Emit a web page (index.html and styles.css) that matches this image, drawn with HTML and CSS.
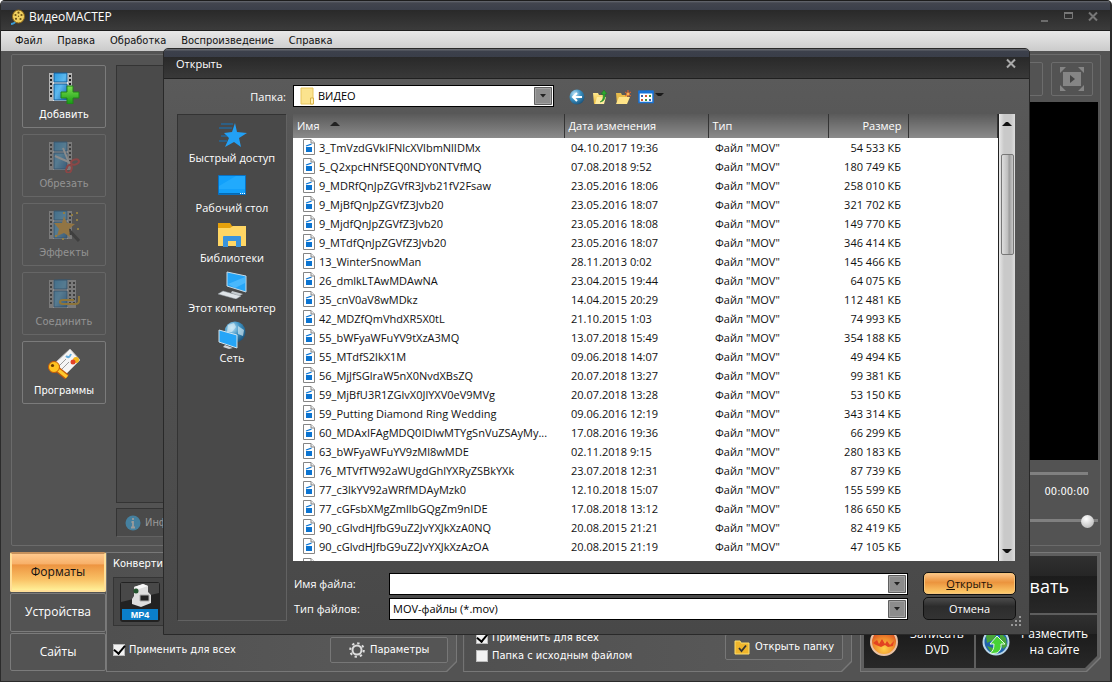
FILE: index.html
```html
<!DOCTYPE html>
<html lang="ru">
<head>
<meta charset="utf-8">
<title>ВидеоМАСТЕР</title>
<link rel="stylesheet" href="styles.css">
</head>
<body>
<svg class="defs" aria-hidden="true">
  <defs>
    <linearGradient id="gBlue" x1="0" y1="0" x2="1" y2="1"><stop offset="0" stop-color="#2a9ae0"/><stop offset=".5" stop-color="#5cb8ee"/><stop offset="1" stop-color="#1769b0"/></linearGradient>
    <linearGradient id="gGreen" x1="0" y1="0" x2="0" y2="1"><stop offset="0" stop-color="#7be04f"/><stop offset="1" stop-color="#169a14"/></linearGradient>
    <linearGradient id="gFolder" x1="0" y1="0" x2="0" y2="1"><stop offset="0" stop-color="#ffe88e"/><stop offset="1" stop-color="#e9b93c"/></linearGradient>
    <radialGradient id="gBall" cx=".35" cy=".3" r=".8"><stop offset="0" stop-color="#bfe6fa"/><stop offset=".5" stop-color="#3a8fc0"/><stop offset="1" stop-color="#17496f"/></radialGradient>
    <radialGradient id="gFire" cx=".5" cy=".75" r=".8"><stop offset="0" stop-color="#ffd24a"/><stop offset=".5" stop-color="#f08a2c"/><stop offset="1" stop-color="#c9301c"/></radialGradient>
    <symbol id="film" viewBox="0 0 32 32">
      <path d="M1 1h23v28H1z" fill="#e4e4e4"/>
      <path d="M1 1h4v28H1zM20 1h4v28h-4z" fill="#b4b4b4"/>
      <path d="M2 3h2v2H2zm0 4h2v2H2zm0 4h2v2H2zm0 4h2v2H2zm0 4h2v2H2zm0 4h2v2H2zM21 3h2v2h-2zm0 4h2v2h-2zm0 4h2v2h-2zm0 4h2v2h-2zm0 4h2v2h-2zm0 4h2v2h-2z" fill="#222"/>
      <path d="M6 1h13v9H6zM6 12h13v16H6z" fill="url(#gBlue)" stroke="#135a94"/>
    </symbol>
    <symbol id="file" viewBox="0 0 12 16">
      <path d="M.5.5h7.500l3.500 3.500v11.500H.5z" fill="#fff" stroke="#858585"/>
      <path d="M8 .5V4h3.500" fill="#eee" stroke="#858585"/>
      <path d="M3 8h6v5H3z" fill="#0b74d1"/><path d="M3 7l5.500-1.800" stroke="#0b74d1" stroke-width="1.300"/>
    </symbol>
    <symbol id="drop" viewBox="0 0 18 18">
      <path d="M.5.5h17v17H.5z" fill="#8c8c8c" stroke="#5f5f5f"/><path d="M1.500 1.500h15v15h-15z" fill="none" stroke="#a2a2a2"/><path d="M6 7h6l-3 3.500z" fill="#222"/>
    </symbol>
  </defs>
</svg>

<div class="app">
  <header class="titlebar">
    <svg class="logo" viewBox="0 0 16 16"><path d="M1 15q3 0 5-3" stroke="#3a9bd2" stroke-width="2" fill="none"/><ellipse cx="8.500" cy="7.500" rx="6" ry="6.500" fill="#f0d060" stroke="#8b6516"/><g fill="#6d5313"><circle cx="8.500" cy="3.700" r="1.100"/><circle cx="5.500" cy="6" r="1.100"/><circle cx="11.500" cy="6" r="1.100"/><circle cx="6" cy="9.800" r="1.100"/><circle cx="10.500" cy="10" r="1.100"/><circle cx="8.500" cy="7.200" r=".7"/></g></svg>
    <h1>ВидеоМАСТЕР</h1>
    <div class="winbtns">
      <button aria-label="Свернуть"><svg viewBox="0 0 12 12"><path d="M2 10h7" stroke="#6c6c6c" stroke-width="2"/></svg></button>
      <button aria-label="Развернуть"><svg viewBox="0 0 12 12"><path d="M1.500 2.500h8v5h-8z" fill="none" stroke="#777"/><path d="M1 2h9" stroke="#777" stroke-width="2"/></svg></button>
      <button aria-label="Закрыть"><svg viewBox="0 0 12 12"><path d="M2 1.500l8 8M10 1.500l-8 8" stroke="#777" stroke-width="2"/></svg></button>
    </div>
  </header>
  <nav class="menu"><a href="#">Файл</a><a href="#">Правка</a><a href="#">Обработка</a><a href="#">Воспроизведение</a><a href="#">Справка</a></nav>

  <main class="workspace">
    <section class="upper">
      <div class="tools">
        <button class="tool"><svg viewBox="0 0 32 32"><use href="#film" width="32" height="32"/><path d="M19 14h6v6h6v6h-6v6h-6v-6h-6v-6h6z" fill="url(#gGreen)" stroke="#23801b"/></svg>Добавить</button>
        <button class="tool" disabled><svg viewBox="0 0 32 32"><use href="#film" width="32" height="32"/><path d="M15 7l6 15M7 15l16 7" stroke="#ddd" stroke-width="2"/><g fill="none" stroke="#e03434" stroke-width="2"><ellipse cx="27" cy="21" rx="4" ry="2.500" transform="rotate(-20 27 21)"/><ellipse cx="21" cy="28" rx="2.500" ry="4" transform="rotate(20 21 28)"/></g></svg>Обрезать</button>
        <button class="tool" disabled><svg viewBox="0 0 32 32"><use href="#film" width="32" height="32"/><path d="M20 19l11 12" stroke="#222" stroke-width="3"/><path d="M16 6l3 7 8 1-6 5 1 8-6-4-7 3 2-7-5-6 8 0z" fill="#f1a92e"/><path d="M23 4h2v2h-2zM28 2h2v2h-2zM28 9h2v2h-2zM29 18h2v2h-2zM15 2h2v2h-2zM7 25h2v2H7zM14 28h2v2h-2z" fill="#f1c02e"/></svg>Эффекты</button>
        <button class="tool" disabled><svg viewBox="0 0 32 32"><use href="#film" x="4" width="32" height="32"/><use href="#film" width="32" height="32"/><path d="M31 17v5q0 3-4 3H15q-3 0-3-2t3-2h11" fill="none" stroke="#e6a817" stroke-width="2"/></svg>Соединить</button>
        <button class="tool"><svg viewBox="0 0 32 32"><path d="M7 15L22 1l10 11-15 15z" fill="#f5f5f5" stroke="#bbb"/><path d="M11 18l7-7M14 21l7-7" stroke="#9b9b9b"/><path d="M18 8q3 3 5-2" stroke="#67aede" stroke-width="2" fill="none"/><circle cx="28" cy="12" r="3" fill="#f4b619"/><circle cx="25" cy="14" r="2.500" fill="#e34228"/><path d="M9 21l10 8" stroke="#c55b0a" stroke-width="6"/><path d="M9 21l10 8" stroke="#ffc92e" stroke-width="3.500"/><circle cx="6" cy="19" r="5.500" fill="#ffc31f" stroke="#c55b0a"/><circle cx="4.500" cy="17.500" r="1.600" fill="#6b3b00"/></svg>Программы</button>
      </div>
      <div class="stage">
        <div class="filelist"></div>
        <div class="infobar"><svg viewBox="0 0 16 16"><circle cx="8" cy="8" r="7.500" fill="#45809f"/><path d="M8 3v2M6.500 7H8v5M6 12.500h4" stroke="#9b9b9b" stroke-width="1.800" fill="none"/></svg>Информация</div>
      </div>
      <div class="player">
        <div class="playertools">
          <button aria-label="Кадр"><svg viewBox="0 0 26 26"><path d="M3 4h17v18H3z" fill="#858585"/><path d="M15 8v10M12 9h6M12 13h6" stroke="#555" stroke-width="2"/></svg></button>
          <button aria-label="На весь экран"><svg viewBox="0 0 26 26"><g fill="#858585"><path d="M4 6h18v14H4z"/><path d="M1 1h6L1 7zM25 1h-6l6 6zM1 25h6l-6-6zM25 25h-6l6-6z"/></g><path d="M11 9l5 4-5 4z" fill="#444"/></svg></button>
        </div>
        <div class="screen"></div>
        <div class="seek"></div>
        <output class="time">00:00:00</output>
        <input class="volume" type="range" value="100" aria-label="Громкость">
      </div>
    </section>

    <section class="lower">
      <div class="tabs"><button class="tab active">Форматы</button><button class="tab">Устройства</button><button class="tab">Сайты</button></div>
      <div class="cut formats"><div class="cutin">
        <h2>Конвертировать в:</h2>
        <div class="formatbox"><svg viewBox="0 0 40 40"><rect width="40" height="40" rx="3" fill="#222"/><path d="M1 1h38v10L1 20z" fill="#484848"/><path d="M2 27h36v11H2z" fill="#0b7fc9"/><path d="M14 5l9-3 5 2v6l3 3v8l-10 4-9-3v-5l2-3z" fill="#dedede"/><path d="M14 5l9-3 5 2-9 3z" fill="#f8f8f8"/><path d="M20 13h9v6h-9z" fill="#222" stroke="#aaa"/><circle cx="16" cy="9" r="2.500" fill="#24552f"/><text x="20" y="36" text-anchor="middle" class="mp4">MP4</text></svg></div>
        <div class="row"><label><input type="checkbox" checked>Применить для всех</label>
        <button class="flat params"><svg viewBox="0 0 16 16"><circle cx="8" cy="8" r="4.500" fill="none" stroke="#ddd" stroke-width="2"/><circle cx="8" cy="8" r="6.800" fill="none" stroke="#ddd" stroke-width="2" stroke-dasharray="2.400 2.940"/></svg>Параметры</button></div>
      </div></div>
      <div class="cut output"><div class="cutin">
        <div class="row"><div class="checks"><label><input type="checkbox" checked>Применить для всех</label><label><input type="checkbox">Папка с исходным файлом</label></div>
        <button class="flat"><svg viewBox="0 0 16 16"><path d="M1 2h5l1 2h8v11H1z" fill="#efb52c" stroke="#ffdf6c"/><path d="M5 9l2.500 3L12 6.500" stroke="#333" stroke-width="1.800" fill="none"/></svg>Открыть папку</button></div>
      </div></div>
      <div class="cut actions"><div class="cutin">
        <button class="big">Конвертировать</button>
        <button class="act"><svg viewBox="0 0 28 28"><circle cx="14" cy="14" r="13" fill="url(#gFire)" stroke="#e8c2a6" stroke-width="2"/><path d="M3 15l4-3 2 4 3-5 3 5 2-3 3 4 4-4-1 5-5 1-3-2-4 2-5-2z" fill="#e34322"/></svg><span>Записать DVD</span></button>
        <button class="act"><svg viewBox="0 0 28 28"><circle cx="14" cy="14" r="12.500" fill="#1f63ac" stroke="#b8d5e8" stroke-width="2"/><path d="M4 8l6-5 5 3-4 6-6 3zM18 4l6 6 1 8-4 3-3-8zM5 18l6 2 1 5-4-2z" fill="#48a33a"/><path d="M15 8l8 8h-4q1 6-4 9-5 1-7 0 4-2 4-9H8z" fill="#48d236" stroke="#e5ffe0"/></svg><span>Разместить на сайте</span></button>
      </div></div>
    </section>
  </main>

  <form class="dialog" role="dialog" aria-label="Открыть">
    <header class="dtitle"><h2>Открыть</h2><button type="button" aria-label="Закрыть"><svg viewBox="0 0 12 12"><path d="M2 1.500l8 8M10 1.500l-8 8" stroke="#aaa" stroke-width="2"/></svg></button></header>
    <div class="dbody">
      <label class="lookin" for="dir">Папка:</label>
      <div class="topbar">
        <div class="combo dircombo"><svg class="dirico" viewBox="0 0 14 18"><path d="M1 1h12v16H1z" fill="#fbe38e" stroke="#e8c55c"/><path d="M10.500 11h3v6h-3z" fill="#fff0b4" stroke="#d9b346"/></svg><select id="dir"><option>ВИДЕО</option></select><svg class="arrow"><use href="#drop"/></svg></div>
        <div class="navicons">
          <button type="button" aria-label="Назад"><svg viewBox="0 0 16 16"><circle cx="8" cy="8" r="7.500" fill="url(#gBall)"/><path d="M13 8H4M8 4L4 8l4 4" stroke="#fff" stroke-width="2" fill="none"/></svg></button>
          <button type="button" aria-label="Вверх"><svg viewBox="0 0 16 16"><path d="M1 4h5l1 2h5v9H2z" fill="url(#gFolder)"/><path d="M5 8h9l-2 7H3z" fill="#ffec9e"/><path d="M8 13q4-2 3-8H9l3-4 3 4h-2q1 7-5 8z" fill="#2fa52f" stroke="#1c7a20" stroke-width=".5"/></svg></button>
          <button type="button" aria-label="Новая папка"><svg viewBox="0 0 16 16"><path d="M1 4h5l1 2h5v9H2z" fill="#e7bb4b"/><path d="M4 8h11l-3 7H1z" fill="#ffe488"/><path d="M13 1v7M10 3l6 4M16 3l-6 4" stroke="#e8632a"/><circle cx="13" cy="5" r="1.500" fill="#ffb04d"/></svg></button>
          <button type="button" class="view" aria-label="Вид"><svg viewBox="0 0 26 16"><path d="M1 2.500h14v11H1z" fill="#fff" stroke="#1673d8" stroke-width="1.500"/><path d="M.5 1.500h15v3H.5z" fill="#1673d8"/><path d="M3 6h2v2H3zM11 10h2v2h-2z" fill="#355fae"/><path d="M7 6h2v2H7zM3 10h2v2H3z" fill="#d05432"/><path d="M11 6h2v2h-2zM7 10h2v2H7z" fill="#3a953c"/><path d="M17 4h9l-3 3h-3z" fill="#1a1a1a"/></svg></button>
        </div>
      </div>

      <nav class="places">
        <a href="#"><svg viewBox="0 0 32 28"><path d="M19 2l2 9 10 1-8 5 2 9-7-5-9 5 4-9-5-5 8-1z" fill="#22a0f5"/><path d="M5 3h12M3 7h13M5 15h6M3 20h8" stroke="#1377c0"/></svg><span>Быстрый доступ</span></a>
        <a href="#"><svg viewBox="0 0 32 28"><path d="M2.500 4.500h27v19h-27z" fill="#12a0fb" stroke="#0871c4"/><path d="M3 15L20 5h9v13H3z" fill="#2cb0ff" opacity=".6"/><path d="M3 22.500h21" stroke="#056bb4"/><path d="M24 22.500h5" stroke="#fff" stroke-dasharray="1 1"/></svg><span>Рабочий стол</span></a>
        <a href="#"><svg viewBox="0 0 32 28"><path d="M2 2h12l2 3h14v5H2z" fill="#e6a10c"/><path d="M2 7h12l3-2h13v20H2z" fill="#ffd664"/><path d="M7 16q0-1 1-1h16q1 0 1 1v10h-5v-6h-8v6H7z" fill="#3a93dc"/></svg><span>Библиотеки</span></a>
        <a href="#"><svg viewBox="0 0 32 28"><path d="M11 1l19 4v16l-19-6z" fill="#25a5f7" stroke="#c6dbe8"/><path d="M12 13L29 6v6l-10 5z" fill="#63c5ff" opacity=".6"/><path d="M16 20l11 3-4 2-8-3z" fill="#c6ccd0"/><path d="M2 23l5-3 18 5-5 3z" fill="#dfe4e8" stroke="#909aa0" stroke-width=".5"/></svg><span>Этот компьютер</span></a>
        <a href="#"><svg viewBox="0 0 32 28"><circle cx="19" cy="11" r="10.500" fill="url(#gBall)"/><path d="M12 4l6-2 2 4-4 5-5 0zM22 5l6 4-1 6-5-2z" fill="#d8edf5" opacity=".65"/><path d="M3 9l18 5v13L3 21z" fill="#25a5f7" stroke="#d2e4ee"/><path d="M9 24l8 3-4 1-6-2z" fill="#cfd4d8"/></svg><span>Сеть</span></a>
      </nav>

      <div class="listwrap">
        <div class="scrollarea">
        <table class="files">
          <colgroup><col class="c1"><col class="c2"><col class="c3"><col class="c4"><col></colgroup>
          <thead><tr><th>Имя <svg class="sort" viewBox="0 0 10 4"><path d="M0 4l4-4h2l4 4z" fill="#222"/></svg></th><th>Дата изменения</th><th>Тип</th><th class="num">Размер</th><th></th></tr></thead>
          <tbody>
          <tr><td><svg><use href="#file"/></svg>3_TmVzdGVkIFNlcXVlbmNlIDMx</td><td>04.10.2017 19:36</td><td>Файл "MOV"</td><td>54 533 КБ</td><td></td></tr>
          <tr><td><svg><use href="#file"/></svg>5_Q2xpcHNfSEQ0NDY0NTVfMQ</td><td>07.08.2018 9:52</td><td>Файл "MOV"</td><td>180 749 КБ</td><td></td></tr>
          <tr><td><svg><use href="#file"/></svg>9_MDRfQnJpZGVfR3Jvb21fV2Fsaw</td><td>23.05.2016 18:06</td><td>Файл "MOV"</td><td>258 010 КБ</td><td></td></tr>
          <tr><td><svg><use href="#file"/></svg>9_MjBfQnJpZGVfZ3Jvb20</td><td>23.05.2016 18:07</td><td>Файл "MOV"</td><td>321 702 КБ</td><td></td></tr>
          <tr><td><svg><use href="#file"/></svg>9_MjdfQnJpZGVfZ3Jvb20</td><td>23.05.2016 18:08</td><td>Файл "MOV"</td><td>149 770 КБ</td><td></td></tr>
          <tr><td><svg><use href="#file"/></svg>9_MTdfQnJpZGVfZ3Jvb20</td><td>23.05.2016 18:07</td><td>Файл "MOV"</td><td>346 414 КБ</td><td></td></tr>
          <tr><td><svg><use href="#file"/></svg>13_WinterSnowMan</td><td>28.11.2013 0:02</td><td>Файл "MOV"</td><td>145 466 КБ</td><td></td></tr>
          <tr><td><svg><use href="#file"/></svg>26_dmlkLTAwMDAwNA</td><td>23.04.2015 19:44</td><td>Файл "MOV"</td><td>64 075 КБ</td><td></td></tr>
          <tr><td><svg><use href="#file"/></svg>35_cnV0aV8wMDkz</td><td>14.04.2015 20:29</td><td>Файл "MOV"</td><td>112 481 КБ</td><td></td></tr>
          <tr><td><svg><use href="#file"/></svg>42_MDZfQmVhdXR5X0tL</td><td>21.10.2015 1:03</td><td>Файл "MOV"</td><td>74 993 КБ</td><td></td></tr>
          <tr><td><svg><use href="#file"/></svg>55_bWFyaWFuYV9tXzA3MQ</td><td>13.07.2018 15:49</td><td>Файл "MOV"</td><td>354 188 КБ</td><td></td></tr>
          <tr><td><svg><use href="#file"/></svg>55_MTdfS2lkX1M</td><td>09.06.2018 14:07</td><td>Файл "MOV"</td><td>49 494 КБ</td><td></td></tr>
          <tr><td><svg><use href="#file"/></svg>56_MjJfSGlraW5nX0NvdXBsZQ</td><td>20.07.2018 13:27</td><td>Файл "MOV"</td><td>99 381 КБ</td><td></td></tr>
          <tr><td><svg><use href="#file"/></svg>59_MjBfU3R1ZGlvX0JlYXV0eV9MVg</td><td>20.07.2018 13:28</td><td>Файл "MOV"</td><td>53 150 КБ</td><td></td></tr>
          <tr><td><svg><use href="#file"/></svg>59_Putting Diamond Ring Wedding</td><td>09.06.2016 12:19</td><td>Файл "MOV"</td><td>343 314 КБ</td><td></td></tr>
          <tr><td><svg><use href="#file"/></svg>60_MDAxIFAgMDQ0IDIwMTYgSnVuZSAyMy...</td><td>17.08.2016 19:36</td><td>Файл "MOV"</td><td>66 299 КБ</td><td></td></tr>
          <tr><td><svg><use href="#file"/></svg>63_bWFyaWFuYV9zMl8wMDE</td><td>02.11.2018 9:15</td><td>Файл "MOV"</td><td>280 183 КБ</td><td></td></tr>
          <tr><td><svg><use href="#file"/></svg>76_MTVfTW92aWUgdGhlYXRyZSBkYXk</td><td>23.07.2018 12:31</td><td>Файл "MOV"</td><td>87 739 КБ</td><td></td></tr>
          <tr><td><svg><use href="#file"/></svg>77_c3lkYV92aWRfMDAyMzk0</td><td>12.10.2018 15:07</td><td>Файл "MOV"</td><td>155 599 КБ</td><td></td></tr>
          <tr><td><svg><use href="#file"/></svg>77_cGFsbXMgZmllbGQgZm9nIDE</td><td>17.08.2018 13:12</td><td>Файл "MOV"</td><td>186 650 КБ</td><td></td></tr>
          <tr><td><svg><use href="#file"/></svg>90_cGlvdHJfbG9uZ2JvYXJkXzA0NQ</td><td>20.08.2015 21:21</td><td>Файл "MOV"</td><td>82 419 КБ</td><td></td></tr>
          <tr><td><svg><use href="#file"/></svg>90_cGlvdHJfbG9uZ2JvYXJkXzAzOA</td><td>20.08.2015 21:19</td><td>Файл "MOV"</td><td>47 105 КБ</td><td></td></tr>
          <tr><td><svg><use href="#file"/></svg></td><td></td><td></td><td></td><td></td></tr>
          </tbody>
        </table>
        </div>
        <div class="scrollbar"><svg viewBox="0 0 10 5"><path d="M0 5l4-4h2l4 4z" fill="#111"/></svg><div class="thumb"></div><svg class="down" viewBox="0 0 10 5"><path d="M0 0l4 4h2l4-4z" fill="#111"/></svg></div>
      </div>

      <div class="fields">
        <label for="fname">Имя файла:</label>
        <div class="combo"><input id="fname" type="text"><svg class="arrow"><use href="#drop"/></svg></div>
        <button type="button" class="pill primary"><span>Открыть</span></button>
        <label for="ftype">Тип файлов:</label>
        <div class="combo"><select id="ftype"><option>MOV-файлы (*.mov)</option></select><svg class="arrow"><use href="#drop"/></svg></div>
        <button type="button" class="pill">Отмена</button>
      </div>
    </div>
    <svg class="grip" viewBox="0 0 10 10"><path d="M8 0h2v2H8zM4 4h2v2H4zM8 4h2v2H8zM0 8h2v2H0zM4 8h2v2H4zM8 8h2v2H8z" fill="#999"/></svg>
  </form>
</div>
</body>
</html>
```
FILE: styles.css
```css
* { box-sizing: border-box; }
body { margin: 0; background: #fff; font-family: "Open Sans", "Noto Sans", sans-serif; font-size: 11px; line-height: 16px; color: #fff; }
h1, h2 { margin: 0; font-weight: 400; font-size: 11px; }
button, input, select { font: inherit; color: inherit; margin: 0; padding: 0; border: 0; background: none; }
a { color: inherit; text-decoration: none; }
svg { display: block; flex: none; }
.defs { position: absolute; width: 0; height: 0; }

.app { position: relative; display: flex; flex-direction: column; min-height: 100vh; background: #535353; border: 1px solid #2b2b2b; border-width: 0 2px 1px 1px; border-radius: 5px 5px 0 0; overflow: hidden; }
.titlebar { display: flex; align-items: center; gap: 3px; height: 31px; padding: 3px 11px 0 9px; background: linear-gradient(#1d1d1d 1px, #686b72 1px, #42454e 3px, #3b3f4a 10px, #292929 10px, #3b3b3b 30px, #1d1d1d 30px); }
.titlebar h1 { font-size: 12px; }
.logo { width: 16px; height: 16px; }
.winbtns { margin-left: auto; display: flex; gap: 12px; }
.winbtns svg { width: 12px; height: 12px; }
.menu { display: flex; gap: 15px; height: 20px; padding: 0 14px; line-height: 20px; color: #111; background: linear-gradient(#e8e8e8, #cbcbcb); }
.workspace { flex: 1; display: flex; flex-direction: column; gap: 6px; padding: 3px 9px 9px; }
.menu, .tool, .row, .formats h2, .infobar, .time { font-family: "DejaVu Sans Condensed", "DejaVu Sans", sans-serif; }

.upper { flex: 1; display: flex; gap: 10px; margin-left: 1px; padding: 10px 10px 8px; border: 1px solid #6b6b6b; border-radius: 2px; }
.tools { display: flex; flex-direction: column; gap: 6px; width: 84px; }
.tool { display: flex; flex-direction: column; align-items: center; gap: 3px; height: 63px; padding-top: 6px; border: 1px solid #7b7b7b; border-radius: 2px; }
.tool svg { width: 32px; height: 32px; }
.tool:disabled { border-color: #666; color: #949494; }
.tool:disabled svg { opacity: .4; }
.stage { flex: 1; display: flex; flex-direction: column; gap: 5px; }
.filelist { flex: 1; background: #4a4a4a; border: 1px solid #343434; }
.infobar { display: flex; align-items: center; gap: 4px; height: 29px; padding-left: 8px; background: #4a4a4a; border: 1px solid #343434; border-bottom-color: #626262; color: #9a9a9a; }
.infobar svg { width: 16px; height: 16px; }
.player { flex: none; width: 300px; display: flex; flex-direction: column; margin: -3px -8px 0 0; }
.playertools { display: flex; justify-content: flex-end; gap: 8px; padding-right: 5px; }
.playertools button { width: 42px; height: 34px; padding: 3px 7px; border: 1px solid #6c6c6c; border-radius: 2px; }
.playertools svg { width: 26px; height: 26px; }
.screen { flex: 1; margin-top: 6px; background: #000; }
.seek { height: 3px; margin: 12px 10px 0 0; background: #808080; }
.time { align-self: flex-end; margin: 9px 9px 0 0; }
.volume { appearance: none; width: 100%; height: 14px; margin: 14px 0 9px; padding-right: 4px; background: linear-gradient(transparent 5px, #808080 5px, #808080 8px, transparent 8px); }
.volume::-webkit-slider-thumb { appearance: none; width: 13px; height: 13px; border-radius: 50%; background: radial-gradient(circle at 40% 30%, #fff, #ababab); }

.lower { display: flex; height: 120px; }
.tabs { display: flex; flex-direction: column; gap: 1px; width: 96px; padding-bottom: 1px; }
.tab { flex: 1; font-size: 12px; border: 1px solid #7b7b7b; border-radius: 2px; }
.tab.active { color: #111; border: 2px solid #ffdf98; border-top-color: #c6915c; background: linear-gradient(#ffc98d, #f7b069 28%, #ed9440 30%, #f9c064 70%, #ffef97); }
.cut { --c: 10px; display: flex; padding: 1px; background: #787878; clip-path: polygon(0 0, 100% 0, 100% calc(100% - var(--c)), calc(100% - var(--c)) 100%, 0 100%); }
.cutin { flex: 1; clip-path: polygon(0 0, 100% 0, 100% calc(100% - var(--c)), calc(100% - var(--c)) 100%, 0 100%); background: linear-gradient(90deg, #505050, #5b5b5b); }
.formats { flex: 351; }
.formats .cutin { padding: 3px 8px 0 6px; }
.formatbox { width: 200px; height: 49px; margin: 5px 0 11px; padding: 4px 6px; background: #464646; border: 1px solid #353535; }
.formatbox svg { width: 40px; height: 40px; }
.mp4 { font: bold 9px "Liberation Sans", sans-serif; fill: #fff; }
.row { display: flex; justify-content: space-between; }
.formats .row { align-items: center; }
.row label { display: flex; align-items: center; gap: 4px; height: 18px; }
.row input { appearance: none; display: grid; place-items: center; width: 12px; height: 12px; background: #f2f2f2; border: 1px solid #bbb; }
.row input:checked::after { content: ""; width: 5px; height: 9px; border: solid #000; border-width: 0 2px 2px 0; transform: rotate(40deg); margin-top: -3px; }
.flat { display: flex; align-items: center; justify-content: center; gap: 5px; width: 118px; height: 26px; background: #555; border: 1px solid #777; border-radius: 2px; }
.flat svg { width: 16px; height: 16px; }
.output { flex: 389; margin-left: 6px; }
.output .cutin { display: flex; align-items: flex-end; padding: 0 8px 6px 12px; }
.output .row { flex: 1; align-items: center; }
.actions { --c: 14px; width: 241px; margin-left: 8px; }
.actions .cutin { display: grid; grid-template-columns: 110px 1fr; grid-template-rows: 57px 1fr; gap: 2px; padding: 3px; background: #5e5e5e; }
.actions button { background: linear-gradient(#303030, #262626 35%, #1c1c1c 36%, #282828); }
.actions .big { grid-column: 1 / 3; padding: 2px 28px 0 0; text-align: right; font-size: 18px; }
.act { display: flex; align-items: center; gap: 7px; padding: 0 5px 0 6px; font-size: 12px; line-height: 16px; }
.act svg { width: 28px; height: 28px; }
.act span { flex: 1; text-align: center; }
.act:last-child { clip-path: polygon(0 0, 100% 0, 100% calc(100% - 12px), calc(100% - 12px) 100%, 0 100%); }

.dialog { position: absolute; inset: 48px 80px 46px 162px; display: flex; flex-direction: column; background: linear-gradient(#5a5a5a 30px, #575757 80px, #484848); border: 1px solid #292929; border-radius: 5px 5px 0 0; overflow: hidden; }
.dtitle { display: flex; align-items: center; justify-content: space-between; height: 30px; padding: 0 12px; background: linear-gradient(#62656c 1px, #3c404b 2px, #3a3e49 8px, #292929 8px, #393939 29px, #202020 29px); }
.dtitle svg { width: 12px; height: 12px; }
.dtitle h2 { font-size: 11px; }
.dbody { flex: 1; display: grid; grid-template: auto 1fr auto / 109px 1fr; column-gap: 7px; padding: 6px 13px 14px; min-height: 0; }
.lookin { text-align: right; line-height: 24px; }
.topbar { display: flex; gap: 15px; height: 29px; }
.combo { display: flex; align-items: center; height: 22px; padding: 1px; background: #fff; border: 1px solid #000; color: #000; }
.combo input, .combo select { flex: 1; width: 100%; min-width: 0; height: 100%; appearance: none; padding-left: 2px; outline: 0; }
.arrow { width: 18px; height: 18px; }
.dircombo { width: 261px; }
.dirico { width: 14px; height: 18px; margin: 0 2px 0 5px; }
.navicons { display: flex; gap: 7px; height: 24px; align-items: center; }
.navicons svg { width: 16px; height: 16px; }
.navicons .view svg { width: 26px; }
.places { grid-row: 2 / 4; display: flex; flex-direction: column; gap: 5px; padding-top: 6px; background: #494949; border: 1px solid #333; border-width: 1px 0 0 1px; box-shadow: 1px 1px #626262; }
.places a { display: flex; flex-direction: column; align-items: center; }
.places svg { width: 32px; height: 28px; }
.places span { line-height: 17px; white-space: nowrap; }
.listwrap { display: flex; min-height: 0; height: 447px; margin-right: 1px; background: #fff; }
.scrollarea { flex: 1; overflow: hidden; border-right: 1px solid #222; }
.files { width: 100%; table-layout: fixed; border-collapse: collapse; color: #111; }
.c1 { width: 271px; } .c2 { width: 144px; } .c3 { width: 120px; } .c4 { width: 80px; }
.files th { height: 24px; padding: 0 5px 0 4px; text-align: left; font-weight: 400; color: #fff; background: linear-gradient(#5a5a5a, #8b8b8b); border-right: 1px solid #343434; }
.files .num { text-align: right; padding-right: 6px; }
.sort { display: inline-block; width: 10px; height: 4px; margin: 0 0 4px 8px; }
.files td { height: 19px; padding: 0 7px; white-space: nowrap; line-height: 19px; }
.files td:first-child { padding-left: 10px; }
.files td:nth-child(4) { text-align: right; }
.files td svg { float: left; width: 12px; height: 16px; margin: 1px 4px 0 0; }
.scrollbar { display: flex; flex-direction: column; align-items: center; width: 16px; padding: 7px 0; background: linear-gradient(90deg, #e8e8e8, #c9c9c9 5px, #c9c9c9 12px, #ddd); }
.scrollbar svg { width: 10px; height: 5px; }
.thumb { width: 13px; height: 101px; margin-top: 28px; border: 1px solid #777; border-radius: 2px; background: linear-gradient(90deg, #dedede, #bcbcbc 6px, #9a9a9a 7px, #c8c8c8); }
.scrollbar .down { margin-top: auto; }
.fields { display: grid; grid-template-columns: 81px 1fr 93px; column-gap: 15px; row-gap: 2px; align-items: center; padding: 11px 0 0; }
.fields label { padding-left: 1px; white-space: nowrap; }
.pill { height: 23px; font-size: 11px; border: 1px solid #111; border-radius: 5px; background: linear-gradient(#4c4c4c, #2c2c2c 40%, #333); }
.pill.primary { color: #1a1208; box-shadow: inset 0 0 0 1px #f5c47c; background: linear-gradient(#ffc98d, #f0a354 30%, #eb943e 45%, #ffd06e); }
.pill span { display: block; }
.pill span::first-letter { text-decoration: underline; }
.grip { position: absolute; right: 8px; bottom: 8px; width: 10px; height: 10px; }
```
